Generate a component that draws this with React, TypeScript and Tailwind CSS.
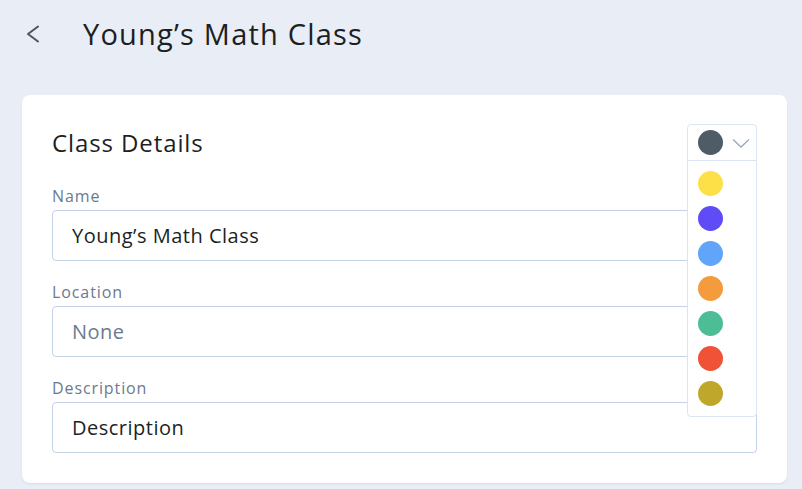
const colors = ['#fde047', '#5f4cf7', '#60a5fa', '#f49b3d', '#4dbd95', '#ef5236', '#bfa72b'];

function Field({ label, value, muted = false }: { label: string; value: string; muted?: boolean }) {
  return (
    <div className="flex flex-col">
      <label className="text-[16px] leading-5 tracking-[0.9px] text-[#6b7a8e] mb-1">{label}</label>
      <div className="h-[51px] rounded-[4px] border border-[#c3d2e8] flex items-center px-[19px]">
        <span className={`text-[20px] tracking-[0.5px] ${muted ? 'text-[#6b7a8e]' : 'text-[#1c1f24]'}`}>{value}</span>
      </div>
    </div>
  );
}

export default function App() {
  return (
    <div
      className="min-h-screen bg-[#e9edf5] pl-[22px] pr-[15px] pt-[14px]"
      style={{ fontFamily: '"Open Sans", Lato, sans-serif' }}
    >
      {/* header */}
      <div className="flex items-center h-[40px]">
        <svg width="16" height="20" viewBox="0 0 16 20" className="ml-[3px] text-[#4b5563]">
          <polyline points="13,2.5 3,10 13,17.5" fill="none" stroke="currentColor" strokeWidth="2" strokeLinecap="round" strokeLinejoin="round" />
        </svg>
        <h1 className="ml-[42px] text-[29px] tracking-[1.2px] text-[#1c1f24]">Young’s Math Class</h1>
      </div>

      {/* card */}
      <div className="mt-[41px] bg-white rounded-lg shadow-[0_1px_2px_rgba(0,0,0,0.08)] px-[30px] pt-[29px] pb-[30px]">
        <div className="flex items-center justify-between h-[37px]">
          <h2 className="text-[24px] tracking-[0.9px] text-[#1c1f24]">Class Details</h2>
          <div className="relative w-[70px] h-[37px]">
            <div className="absolute top-0 left-0 w-[70px] bg-white border border-[#dbe5f3] rounded-[4px] z-10">
              <div className="h-[36px] flex items-center pl-[10px] pr-[6px] border-b border-[#dbe5f3]">
                <span className="w-[25px] h-[25px] rounded-full bg-[#4f5b67]" />
                <svg width="18" height="10" viewBox="0 0 18 10" className="ml-auto text-[#9aa8bd]">
                  <polyline points="1,1.5 9,9 17,1.5" fill="none" stroke="currentColor" strokeWidth="1.3" />
                </svg>
              </div>
              <div className="flex flex-col gap-[10px] px-[10px] pt-[10px] pb-[10px]">
                {colors.map((c) => (
                  <span key={c} className="w-[25px] h-[25px] rounded-full" style={{ backgroundColor: c }} />
                ))}
              </div>
            </div>
          </div>
        </div>

        <div className="mt-[25px] flex flex-col gap-[21px]">
          <Field label="Name" value="Young’s Math Class" />
          <Field label="Location" value="None" muted />
          <Field label="Description" value="Description" />
        </div>
      </div>
    </div>
  );
}
